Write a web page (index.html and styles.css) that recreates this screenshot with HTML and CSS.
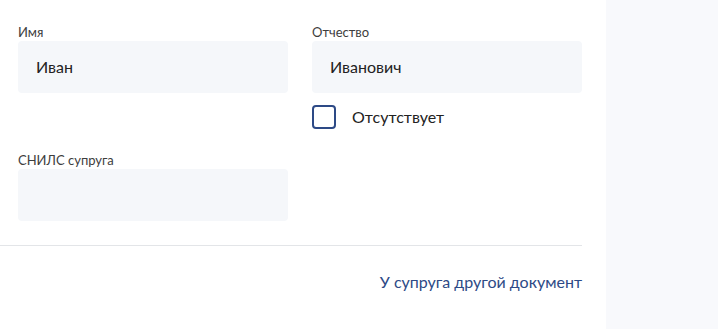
FILE: index.html
```html
<!DOCTYPE html>
<html lang="ru">
<head>
    <meta charset="UTF-8">
    <title>Сведения о супруге</title>
    <link rel="stylesheet" href="styles.css">
</head>
<body>
    <div class="page">
        <div class="main">
            <div class="form">
                <div class="row">
                    <div class="field">
                        <label class="label">Имя</label>
                        <div class="input">Иван</div>
                    </div>
                    <div class="field">
                        <label class="label">Отчество</label>
                        <div class="input">Иванович</div>
                        <label class="check">
                            <span class="box"></span>
                            <span>Отсутствует</span>
                        </label>
                    </div>
                </div>
                <div class="row second">
                    <div class="field">
                        <label class="label">СНИЛС супруга</label>
                        <div class="input"></div>
                    </div>
                </div>
            </div>
            <hr class="divider">
            <div class="actions">
                <a class="link" href="#">У супруга другой документ</a>
            </div>
        </div>
        <div class="aside"></div>
    </div>
</body>
</html>
```

FILE: styles.css
```css
body {
    margin: 0;
    font-family: Lato, "Open Sans", sans-serif;
    color: #222;
    background: white;
}
.page {
    display: flex;
    min-height: 329px;
}
.main {
    width: 606px;
    background: white;
}
.aside {
    flex: 1;
    background: #f8f9fc;
}
.form {
    padding: 24px 24px 0 18px;
}
.row {
    display: grid;
    grid-template-columns: 270px 270px;
    column-gap: 24px;
}
.row.second {
    margin-top: 23px;
}
.label {
    display: block;
    font-size: 13px;
    line-height: 17px;
    color: #3d3d3d;
}
.input {
    height: 52px;
    box-sizing: border-box;
    padding: 0 18px;
    background: #f5f7fa;
    border-radius: 4px;
    font-size: 16px;
    line-height: 52px;
}
.check {
    display: flex;
    align-items: center;
    gap: 16px;
    margin-top: 12px;
    font-size: 16px;
    line-height: 24px;
}
.box {
    width: 24px;
    height: 24px;
    box-sizing: border-box;
    border: 2px solid #2d4a86;
    border-radius: 4px;
}
.divider {
    margin: 24px 24px 0 0;
    border: none;
    border-top: 1px solid #e3e5e8;
}
.actions {
    display: flex;
    justify-content: flex-end;
    padding: 24px 24px 0 0;
}
.link {
    color: #2d4a86;
    font-size: 16px;
    line-height: 24px;
    text-decoration: none;
}
```
